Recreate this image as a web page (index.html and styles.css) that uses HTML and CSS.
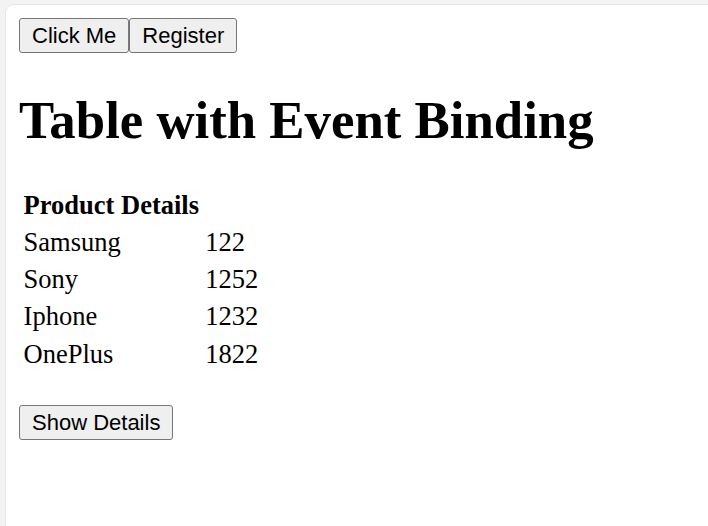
FILE: index.html
```html
<!DOCTYPE html>
<html lang="en">

<head>
    <meta charset="UTF-8">
    <meta name="viewport" content="width=device-width, initial-scale=1.0">
    <title>Table with Event Binding</title>
    <link rel="stylesheet" href="styles.css">
</head>

<body>
    <div class="page">
        <div class="toolbar">
            <button type="button" class="btn">Click Me</button><button type="button" class="btn">Register</button>
        </div>

        <h1>Table with Event Binding</h1>

        <table class="products">
            <thead>
                <tr>
                    <th>Product Details</th>
                </tr>
            </thead>
            <tbody>
                <tr>
                    <td>Samsung</td>
                    <td>122</td>
                </tr>
                <tr>
                    <td>Sony</td>
                    <td>1252</td>
                </tr>
                <tr>
                    <td>Iphone</td>
                    <td>1232</td>
                </tr>
                <tr>
                    <td>OnePlus</td>
                    <td>1822</td>
                </tr>
            </tbody>
        </table>

        <div class="actions">
            <button type="button" class="btn">Show Details</button>
        </div>
    </div>
</body>

</html>
```

FILE: styles.css
```css
html,
body {
    height: 100%;
}

body {
    margin: 0;
    padding: 5px 0 0 6px;
    box-sizing: border-box;
    background-color: #f3f3f3;
    font-family: "Liberation Serif", "Times New Roman", serif;
    color: #000;
    overflow: hidden;
}

.page {
    height: 100%;
    box-sizing: border-box;
    padding: 13px;
    background: #fff;
    border-top-left-radius: 8px;
    box-shadow: 0 0 0 1px #e6e6e6;
}

.toolbar {
    display: flex;
}

.btn {
    font-family: "Liberation Sans", Arial, sans-serif;
    font-size: 22px;
    line-height: 26px;
    color: #000;
    padding: 3.5px 12px;
    background: #efefef;
    border: 1px solid #767676;
    border-radius: 3px;
    cursor: pointer;
}

.btn:hover {
    background: #e5e5e5;
}

h1 {
    font-size: 52.8px;
    margin: 37px 0 34.6px;
}

.products {
    border-spacing: 3.25px;
    font-size: 26.5px;
}

.products th,
.products td {
    padding: 2px 1.6px;
    line-height: 30.3px;
    text-align: left;
}

.actions {
    margin-top: 31px;
}
```
